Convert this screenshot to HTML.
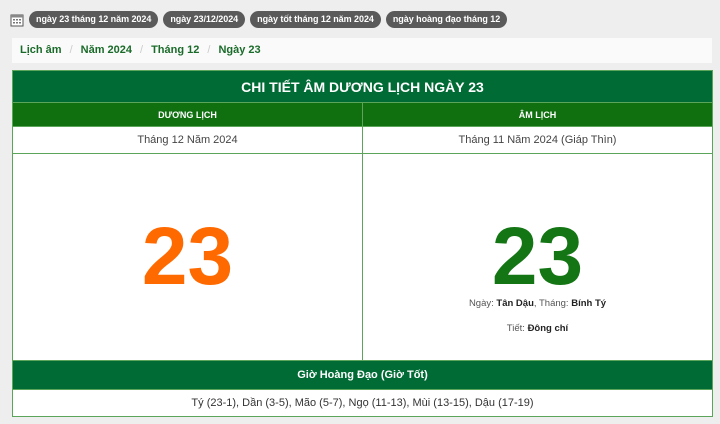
<!DOCTYPE html>
<html><head><meta charset="utf-8"><style>
*{margin:0;padding:0;box-sizing:border-box}
body{width:720px;height:424px;background:#eeeeee;font-family:"Liberation Sans",Arial,sans-serif;position:relative;overflow:hidden}
.tags{position:absolute;top:11px;left:10px;display:flex;align-items:center;gap:5px}
.tag{background:#5a5a5a;color:#fff;font-size:9px;font-weight:bold;border-radius:9px;height:17px;line-height:17px;padding:0 7px;letter-spacing:-0.05px}
.bc{position:absolute;top:38px;left:12px;width:700px;height:25px;background:#fafafa;font-size:11px;font-weight:bold;color:#1a6b2a;line-height:25px;padding-left:8px}
.bc span{color:#ccc;font-weight:normal;margin:0 8px}
table{position:absolute;top:70px;left:12px;width:701px;border-collapse:collapse;background:#fff}
td{border:1px solid #5aa55a;text-align:center}
.t1{background:#006b35;color:#fff;font-size:14px;font-weight:bold;height:32px}
.h{background:#107010;color:#fff;font-size:9px;font-weight:bold;height:24px}
.r{font-size:11px;color:#444;height:27px}
.big{height:207px;vertical-align:middle;position:relative}
.n{font-size:82px;font-weight:bold;line-height:1}
.g2{background:#006b35;color:#fff;font-size:11px;font-weight:bold;height:29px}
.sm{font-size:9.5px;color:#555;position:absolute;left:0;right:0}
.sm b{color:#222}
</style></head><body>
<div class="tags">
<svg width="14" height="14" viewBox="0 0 14 14"><rect x="1" y="2" width="12" height="11" fill="#fff" stroke="#555"/><rect x="1" y="2" width="12" height="2.5" fill="#888"/><g fill="#777"><rect x="3" y="6" width="2" height="1.5"/><rect x="6" y="6" width="2" height="1.5"/><rect x="9" y="6" width="2" height="1.5"/><rect x="3" y="9" width="2" height="1.5"/><rect x="6" y="9" width="2" height="1.5"/><rect x="9" y="9" width="2" height="1.5"/></g></svg>
<div class="tag">ngày 23 tháng 12 năm 2024</div><div class="tag">ngày 23/12/2024</div><div class="tag">ngày tốt tháng 12 năm 2024</div><div class="tag">ngày hoàng đạo tháng 12</div>
</div>
<div class="bc">Lịch âm<span>/</span>Năm 2024<span>/</span>Tháng 12<span>/</span>Ngày 23</div>
<table>
<tr><td colspan="2" class="t1">CHI TIẾT ÂM DƯƠNG LỊCH NGÀY 23</td></tr>
<tr><td class="h" style="width:350px">DƯƠNG LỊCH</td><td class="h">ÂM LỊCH</td></tr>
<tr><td class="r">Tháng 12 Năm 2024</td><td class="r">Tháng 11 Năm 2024 (Giáp Thìn)</td></tr>
<tr><td class="big"><div class="n" style="color:#ff6a00">23</div></td>
<td class="big"><div class="n" style="color:#137513">23</div>
<div class="sm" style="top:144px">Ngày: <b>Tân Dậu</b>, Tháng: <b>Bính Tý</b></div>
<div class="sm" style="top:169px">Tiết: <b>Đông chí</b></div></td></tr>
<tr><td colspan="2" class="g2">Giờ Hoàng Đạo (Giờ Tốt)</td></tr>
<tr><td colspan="2" class="r" style="color:#333">Tý (23-1), Dần (3-5), Mão (5-7), Ngọ (11-13), Mùi (13-15), Dậu (17-19)</td></tr>
</table>
</body></html>
